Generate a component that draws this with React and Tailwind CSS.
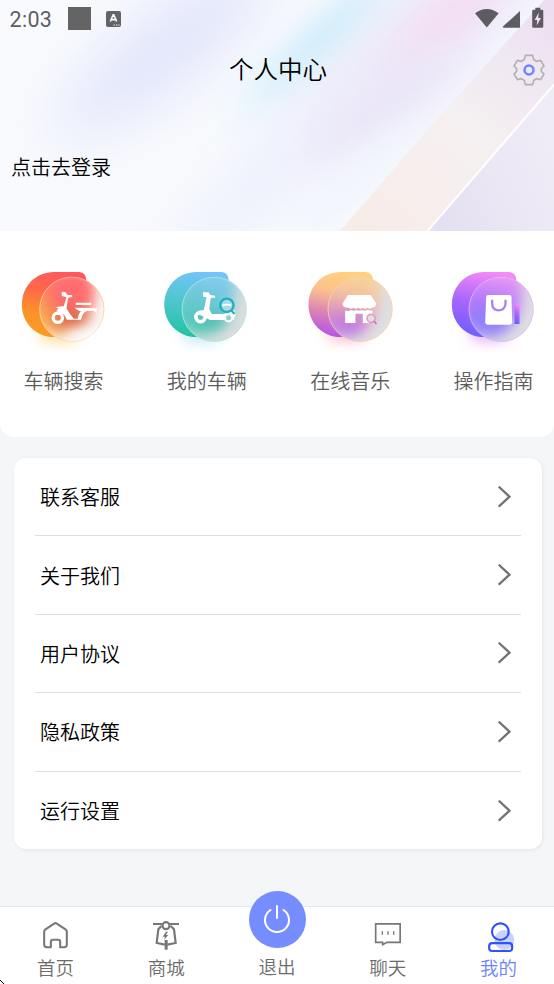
import React from 'react';

// Header artwork: soft diagonal light streaks plus the two glass bands on the right.
const HeaderArt = () => (
  <svg className="absolute inset-0 h-full w-full" viewBox="0 0 554 231" preserveAspectRatio="none" aria-hidden="true">
    <defs>
      <filter id="soft" x="-200" y="-200" width="1000" height="700" filterUnits="userSpaceOnUse">
        <feGaussianBlur stdDeviation="32 15" />
      </filter>
      <filter id="softer" x="-300" y="-300" width="1200" height="900" filterUnits="userSpaceOnUse">
        <feGaussianBlur stdDeviation="36 26" />
      </filter>
      <linearGradient id="band" x1="380" y1="231" x2="545" y2="10" gradientUnits="userSpaceOnUse">
        <stop offset="0" stopColor="#f8ece9" />
        <stop offset="0.5" stopColor="#f5f0f1" />
        <stop offset="0.8" stopColor="#efe7f2" />
        <stop offset="1" stopColor="#eddff1" />
      </linearGradient>
      <linearGradient id="corner" x1="440" y1="225" x2="560" y2="170" gradientUnits="userSpaceOnUse">
        <stop offset="0" stopColor="#e5e0f1" />
        <stop offset="1" stopColor="#efecf7" />
      </linearGradient>
    </defs>
    <rect width="554" height="231" fill="#f8fafd" />
    <ellipse cx="165" cy="50" rx="130" ry="40" fill="#e3e6fb" transform="rotate(-38 165 50)" filter="url(#softer)" />
    <ellipse cx="410" cy="50" rx="170" ry="60" fill="#ecebfa" transform="rotate(-42 410 50)" filter="url(#softer)" />
    <ellipse cx="260" cy="185" rx="130" ry="26" fill="#edf0fc" transform="rotate(-42 260 185)" filter="url(#softer)" />
    <ellipse cx="318" cy="40" rx="95" ry="14" fill="#c6ebfb" transform="rotate(-43 318 40)" filter="url(#soft)" />
    <ellipse cx="455" cy="12" rx="75" ry="24" fill="#f4ddf2" transform="rotate(-40 455 12)" filter="url(#soft)" />
    <ellipse cx="385" cy="105" rx="75" ry="18" fill="#eae4f7" transform="rotate(-36 385 105)" filter="url(#soft)" />
    <ellipse cx="350" cy="190" rx="90" ry="14" fill="#f0f5fd" transform="rotate(-46 350 190)" filter="url(#soft)" />
    <path d="M340 231 437 119 520 27 544 0H554V84L427 231Z" fill="url(#band)" />
    <path d="M428 231 554 85V231Z" fill="url(#corner)" />
    <path d="M427.500 231 554 84.500" stroke="#fff" strokeWidth="2" />
  </svg>
);

const StatusBar = () => (
  <div className="relative flex h-[38px] items-center pl-[9.5px] pr-[10px] text-[#5f5e63]">
    <span className="w-[58px] pt-[2px] font-[Roboto] text-[21.5px] font-normal tracking-[0.3px]">2:03</span>
    <span className="-mt-px size-[23px] bg-[#646464]" />
    <svg className="ml-[15px] h-4 w-[15px]" viewBox="0 0 15 16">
      <rect width="15" height="16" rx="2" fill="#646466" />
      <path d="M4.300 10.500 7.200 3.800h.600l2.900 6.700M5.400 8.600h4.200" fill="none" stroke="#fff" strokeWidth="1.600" />
      <path d="M7.500 14h1.300M10 14h1.300M12.300 14h1.200" stroke="#fff" strokeWidth="1" />
    </svg>
    <svg className="-mt-[2px] ml-auto h-[22px] w-[70px]" viewBox="474 7 70 22" fill="#5f5b63">
      <path d="M475 13.200Q486.800 4.600 498.700 13.200L486.800 27.500Z" />
      <path d="M520 11V27.700H503.500Q502.200 27.400 503.200 26.300Z" />
      <path d="M535.300 7.800h5v2H542q1.300 0 1.300 1.300v15.400q0 1.300-1.300 1.300h-8.500q-1.300 0-1.300-1.300V11.100q0-1.300 1.300-1.300h1.800Z" />
      <path d="M538.800 12.500 534.700 20h2.600l-.6 5.500 4.200-7.500h-2.700l.6-5.500Z" fill="#f0e6f2" />
    </svg>
  </div>
);

const SettingsIcon = () => (
  <svg className="size-8" viewBox="0 0 96 96" fill="none" strokeLinejoin="round">
    <path
      d="M37 4h22l3 13q4 1 8 5l13-3 10 17-8 8q1 4 0 8l8 8-10 17-13-3q-4 4-8 5l-3 13H37l-3-13q-4-1-8-5l-13 3L3 60l8-8q-1-4 0-8l-8-8 10-17 13 3q4-4 8-5Z"
      stroke="#b3b1b4" strokeWidth="5"
    />
    <circle cx="48" cy="48" r="13.500" stroke="#6f86ff" strokeWidth="7.500" />
  </svg>
);

// Layered badge: solid blob at the back, frosted disc on top. `cx` is the disc centre.
const Badge = ({ id, viewBox, left, cx, stops, edge, glow, glass, children }) => {
  const blob = `M${left + 97} 36H${left + 172}Q${left + 194} 38 ${left + 194} 64C${left + 194} 130 ${left + 180} 231 ${left + 96} 231C${left + 42} 231 ${left} 188 ${left} 134C${left} 78 ${left + 42} 36 ${left + 97} 36Z`;
  return (
    <svg className="size-[84px] overflow-visible" viewBox={viewBox}>
      <defs>
        <linearGradient id={`${id}-fill`} x1="0.6" y1="0" x2="0.400" y2="1">
          {stops.map((color, i) => (
            <stop key={color} offset={i / (stops.length - 1)} stopColor={color} />
          ))}
        </linearGradient>
        <clipPath id={`${id}-clip`}><circle cx={cx} cy="148" r="97" /></clipPath>
        <filter id={`${id}-blur`} x="-60%" y="-60%" width="220%" height="220%">
          <feGaussianBlur stdDeviation="21" />
        </filter>
      </defs>
      <ellipse cx={left + 112} cy="222" rx="62" ry="24" fill={glow} opacity="0.75" filter={`url(#${id}-blur)`} />
      <path d={blob} fill={`url(#${id}-fill)`} />
      <g clipPath={`url(#${id}-clip)`}>
        <circle cx={cx} cy="148" r="97" fill={glass} />
        <path d={blob} fill={`url(#${id}-fill)`} opacity="0.82" transform="translate(20 -6)" filter={`url(#${id}-blur)`} />
      </g>
      <circle cx={cx} cy="148" r="96.500" fill="none" stroke={edge} strokeWidth="2.500" />
      {children}
    </svg>
  );
};

const SearchVehicleIcon = () => (
  <Badge id="search" viewBox="34.5 24 252 252" left={34} cx={184} stops={['#ff5660', '#fe6a48', '#fb9228', '#fb9b25']} edge="#fbd49c" glow="#fbd070" glass="#faf6f6">
    <g clipPath="url(#search-clip)">
      <ellipse cx="180" cy="110" rx="66" ry="62" fill="#ff6272" opacity="0.7" filter="url(#search-blur)" />
      <ellipse cx="182" cy="180" rx="52" ry="30" fill="#c04a48" opacity="0.6" filter="url(#search-blur)" />
      <ellipse cx="225" cy="232" rx="70" ry="28" fill="#fff" opacity="0.8" filter="url(#search-blur)" />
    </g>
    <g fill="#fff">
      <path d="M148 97q8-3 17 0l5 7 15 2v5l-12 2-5 32 9 15 13 16h12q2-26 29-31h31q-7 3-3 15-7-9-20-9-22 2-26 24l-2 4h-42l-8-15-23-12 6-7-10-2q12-6 26-4l8-28-12-2q-6-6 0-12Z" />
      <path d="M196 128h46v7h-46zM192 143l48 1 6 6-8 3h-32Z" />
    </g>
    <circle cx="142" cy="173" r="14" fill="none" stroke="#fff" strokeWidth="10" />
  </Badge>
);

const MyVehicleIcon = () => (
  <Badge id="mine" viewBox="44.4 24 252 252" left={42} cx={192} stops={['#73c4fb', '#4fc6cf', '#22c3a3']} edge="#a9e8dc" glow="#a9dcf0" glass="#dedede">
    <ellipse cx="195" cy="180" rx="40" ry="16" fill="#4c8f8c" opacity="0.35" filter="url(#mine-blur)" />
    <path d="M158 97h17l5 8 15 2v6h-13l-5 34 8 15h38q9-15 27-12 6 4 6 14l-6 16H179l-17-10-25-10q12-10 24-10l8-38-10-2Z" fill="#fff" />
    <circle cx="151" cy="171" r="14" fill="none" stroke="#fff" strokeWidth="11" />
    <circle cx="235" cy="173" r="11" fill="#9ccac4" stroke="#f4fbfa" strokeWidth="7" />
    <circle cx="230" cy="136" r="20" fill="#a9dde3" stroke="#25abc8" strokeWidth="7" />
    <path d="M217 136q13-4 26 0" stroke="#fff" strokeWidth="5" fill="none" />
    <path d="M243 151 253 162" stroke="#18b9b3" strokeWidth="7" />
  </Badge>
);

const StoreIcon = () => (
  <Badge id="store" viewBox="37.6 24 252 252" left={39} cx={194} stops={['#ffd080', '#fcc18d', '#db83b5', '#b553e5']} edge="#f6d2a0" glow="#fdb7ba" glass="#dfe0e3">
    <ellipse cx="160" cy="190" rx="46" ry="30" fill="#b878ec" opacity="0.6" filter="url(#store-blur)" />
    <path d="M157 105h69l16 25q0 13-13 13-5 6-13 0-7 6-14 0-7 6-14 0-7 6-14 0-7 6-14 0-18 1-19-12Z" fill="#fff" />
    <path d="M149 151q10 4 18-1 8 5 16 0 8 5 16 0 8 5 16 0l16 2v37h-29v-28h-22v28h-31Z" fill="#fff" />
    <circle cx="227" cy="175" r="12" fill="#eadce7" stroke="#d99fbf" strokeWidth="5" />
    <path d="M235 183 243 192" stroke="#b979c9" strokeWidth="5" />
  </Badge>
);

const GuideIcon = () => (
  <Badge id="guide" viewBox="49.5 24 252 252" left={52} cx={200} stops={['#f68af5', '#a766ff', '#6f5cff']} edge="#e0b7ef" glow="#e79bf7" glass="#dfdfe2">
    <ellipse cx="160" cy="185" rx="40" ry="34" fill="#8f8cff" opacity="0.6" filter="url(#guide-blur)" />
    <path d="M162 105h63q6 0 6 6l2 76q0 7-7 7h-67q-7 0-7-7l3-75q0-7 7-7Z" fill="#fff" />
    <path d="M173 122v10q0 17 18 19 20 0 22-19v-10" fill="none" stroke="#a486f0" strokeWidth="7" strokeLinecap="round" />
    <path d="M240 132h15v60h-15z" fill="url(#guide-fill)" />
  </Badge>
);

const HomeIcon = () => (
  <svg className="h-[34px] w-10" viewBox="106.5 261 120 102" fill="none" stroke="#777" strokeWidth="6.200" strokeLinejoin="round">
    <path d="M134 305q0-4 4-7l26-17q4-3 8 0l26 17q4 3 4 7v38q0 9-8 9h-12v-17q0-6-6-6h-16q-6 0-6 6v17h-12q-8 0-8-9Z" />
  </svg>
);

const ScooterIcon = () => (
  <svg className="h-[34px] w-10" viewBox="438 261 120 102" fill="none" stroke="#777" strokeWidth="6.500">
    <path d="M459 282h28M509 282h28M484 288l-9 10-5 41 25 5M512 288l10 10 5 41-25 5" />
    <circle cx="498" cy="287" r="10.500" />
    <path d="M498.500 330v29" strokeWidth="9" />
    <path d="M498 305 488 320h7l-3 10 13-15h-7l6-10Z" fill="#777" stroke="none" />
  </svg>
);

const ChatIcon = () => (
  <svg className="h-[34px] w-10" viewBox="272 261 120 102" fill="none" stroke="#777" strokeWidth="5">
    <path d="M295 281.500h73.500V337H329l-13 7v-7h-21Z" />
    <path d="M315 304v10M332 304v10M349 304v10" strokeWidth="4" />
  </svg>
);

const MeIcon = () => (
  <svg className="h-[34px] w-10 overflow-visible" viewBox="605 261 120 102" fill="none" stroke="#3152fb" strokeWidth="6.500">
    <circle cx="681" cy="330" r="30" fill="#cad3ff" stroke="none" />
    <circle cx="669" cy="305" r="25" />
    <rect x="635.500" y="339.500" width="69" height="23.500" rx="9" />
  </svg>
);

const features = [
  { label: '车辆搜索', Icon: SearchVehicleIcon },
  { label: '我的车辆', Icon: MyVehicleIcon },
  { label: '在线音乐', Icon: StoreIcon },
  { label: '操作指南', Icon: GuideIcon },
];

const menu = ['联系客服', '关于我们', '用户协议', '隐私政策', '运行设置'];

const Tab = ({ label, active, children }) => (
  <button type="button" className={`flex flex-1 flex-col items-center pt-[10px] text-[18.5px] leading-[27px] ${active ? 'text-[#6b82f8]' : 'text-[#6c6c6c]'}`}>
    {children}
    <span className="mt-[3px]">{label}</span>
  </button>
);

const App = () => (
  <div className="relative flex h-[984px] w-[554px] flex-col overflow-hidden bg-[#f5f6f8] font-['Noto_Sans_CJK_SC',sans-serif] font-[350] text-black">
    <header className="relative h-[231px] shrink-0 overflow-hidden">
      <HeaderArt />
      <StatusBar />
      <div className="relative grid h-[64px] grid-cols-[1fr_auto_1fr] items-center pr-[9px]">
        <h1 className="col-start-2 -mt-[3px] pl-[11px] text-[24.500px] leading-[36px]">个人中心</h1>
        <button type="button" className="justify-self-end"><SettingsIcon /></button>
      </div>
      <button type="button" className="relative mt-[50px] ml-[11px] block text-[20px] leading-[30px]">点击去登录</button>
    </header>

    <section className="flex h-[206px] shrink-0 justify-between rounded-b-[14px] bg-white pt-[37px] pr-[18.5px] pl-[21.5px]">
      {features.map(({ label, Icon }) => (
        <button key={label} type="button" className="flex w-[84px] flex-col items-center text-[20px] leading-[30px] text-[#5c5c5c]">
          <Icon />
          <span className="mt-[14px]">{label}</span>
        </button>
      ))}
    </section>

    <ul className="mt-[21px] mr-[12.5px] ml-[14px] h-[391px] shrink-0 rounded-[12px] bg-white px-[21px] shadow-[1px_1px_4px_rgba(0,0,0,0.07)]">
      {menu.map((item) => (
        <li key={item} className="flex h-[78.4px] items-center justify-between border-b-[1.500px] border-[#dedede] pt-px pr-[9px] pl-[5px] text-[20px] leading-[30px] last:border-b-0">
          {item}
          <svg className="-mt-px h-[22px] w-[14px]" viewBox="0.5 0.3 14 22" fill="none" stroke="#727272" strokeWidth="2.300">
            <path d="M1.200 1 12 11 1.200 21" />
          </svg>
        </li>
      ))}
    </ul>

    <nav className="mt-auto flex h-[78px] shrink-0 border-t border-[#dce9fb] bg-white">
      <Tab label="首页"><HomeIcon /></Tab>
      <Tab label="商城"><ScooterIcon /></Tab>
      <button type="button" className="flex flex-1 flex-col items-center text-[18.500px] leading-[27px] text-[#6c6c6c]">
        <span className="-mt-[16.5px] ml-px flex size-[57px] items-center justify-center rounded-full bg-[#758dfe]">
          <svg className="size-[30px]" viewBox="0 0 30 30" fill="none" stroke="#fff" strokeWidth="2" strokeLinecap="round">
            <path d="M15 2v12M8.500 6a12 12 0 1 0 13 0" />
          </svg>
        </span>
        <span className="mt-[5px]">退出</span>
      </button>
      <Tab label="聊天"><ChatIcon /></Tab>
      <Tab label="我的" active><MeIcon /></Tab>
    </nav>

    <svg className="absolute bottom-0 left-0 size-1" viewBox="0 0 4 4" shapeRendering="crispEdges">
      <path d="M0 0h1v1H0zM1 1h1v1H1zM2 2h1v1H2zM3 3h1v1H3z" />
    </svg>
  </div>
);

export default App;
